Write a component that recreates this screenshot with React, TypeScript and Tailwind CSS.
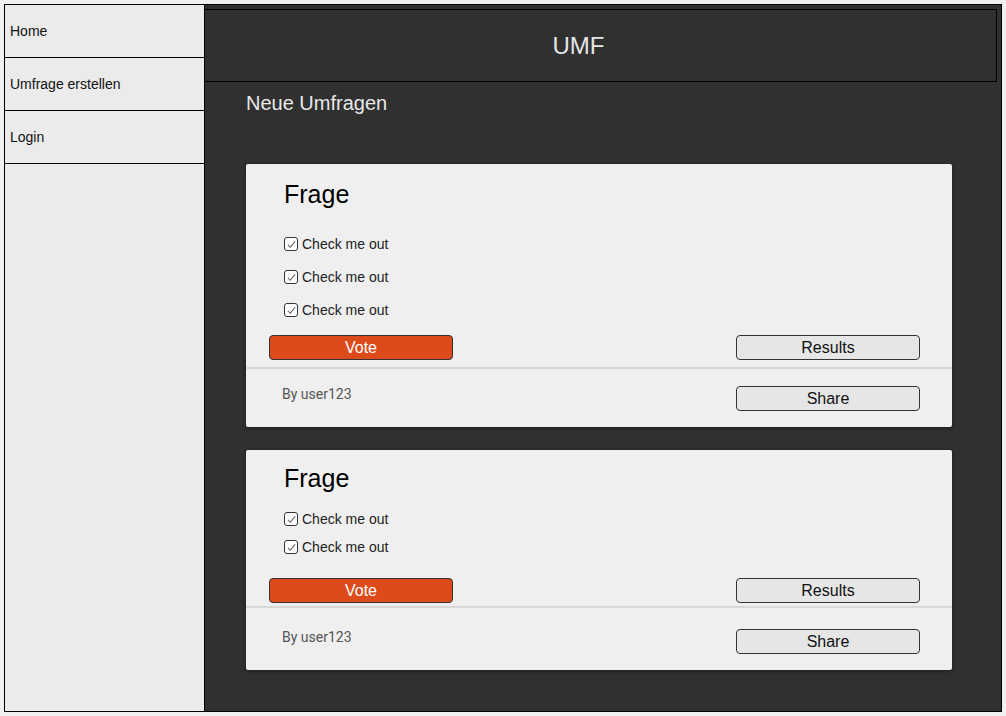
import React from 'react';

type Poll = {
  title: string;
  options: string[];
  // per-card spacing, written out in full so Tailwind picks them up
  top: string;
  list: string;
  actions: string;
  divider: string;
  footer: string;
};

const polls: Poll[] = [
  {
    title: 'Frage',
    options: ['Check me out', 'Check me out', 'Check me out'],
    top: 'pt-[16px]',
    list: 'mt-[25px] gap-[13px]',
    actions: 'mt-[15px]',
    divider: 'mt-[7px]',
    footer: 'pt-[17px] pb-[16px]',
  },
  {
    title: 'Frage',
    options: ['Check me out', 'Check me out'],
    top: 'pt-[14px]',
    list: 'mt-[16px] gap-[8px]',
    actions: 'mt-[21px]',
    divider: 'mt-[3px]',
    footer: 'pt-[21px] pb-[16px]',
  },
];

const navItems = ['Home', 'Umfrage erstellen', 'Login'];

const CheckBox: React.FC = () => (
  <span className="flex h-[14px] w-[14px] items-center justify-center rounded-[3px] border border-[#333] bg-white">
    <svg viewBox="0 0 12 12" className="h-[11px] w-[11px]" fill="none" stroke="#555" strokeWidth="1.1">
      <path d="M2 6.3 L4.6 9 L10 2.5" />
    </svg>
  </span>
);

const PollCard: React.FC<{ poll: Poll }> = ({ poll }) => (
  <div className={`w-[706px] rounded-[2px] bg-[#efefef] shadow-[0_1px_4px_rgba(0,0,0,0.45)] ${poll.top}`}>
    <h2 className="pl-[38px] text-[25px] leading-[29px] text-black">{poll.title}</h2>

    <div className={`flex flex-col pl-[38px] ${poll.list}`}>
      {poll.options.map((opt, i) => (
        <label key={i} className="flex h-[20px] items-center gap-[4px] text-[14px] text-[#222]">
          <CheckBox />
          {opt}
        </label>
      ))}
    </div>

    <div className={`flex justify-between pl-[23px] pr-[32px] ${poll.actions}`}>
      <button className="h-[25px] w-[184px] rounded-[4px] border border-[#333] bg-[#dd4b1a] text-[16px] leading-none text-white">
        Vote
      </button>
      <button className="h-[25px] w-[184px] rounded-[4px] border border-[#333] bg-[#e6e6e6] text-[16px] leading-none text-[#111]">
        Results
      </button>
    </div>

    <div className={`h-[2px] bg-[#d9d9d9] ${poll.divider}`} />

    <div className={`flex items-start justify-between pl-[36px] pr-[32px] ${poll.footer}`}>
      <span className="font-['Roboto',sans-serif] text-[14px] leading-[17px] text-[#555]">By user123</span>
      <button className="h-[25px] w-[184px] rounded-[4px] border border-[#333] bg-[#e6e6e6] text-[16px] leading-none text-[#111]">
        Share
      </button>
    </div>
  </div>
);

export default function App() {
  return (
    <div className="h-screen bg-[#f0f0f0] p-[4px] font-['Liberation_Sans',Arial,sans-serif]">
      <div className="flex h-full border border-black">
        {/* Sidebar */}
        <aside className="w-[200px] shrink-0 border-r border-black bg-[#ebebeb]">
          {navItems.map((item) => (
            <div
              key={item}
              className="flex h-[53px] items-center border-b border-black pl-[5px] text-[14px] text-[#111]"
            >
              {item}
            </div>
          ))}
        </aside>

        {/* Main */}
        <main className="flex-1 bg-[#303030] pr-[4px] pt-[4px]">
          <header className="flex h-[73px] items-center justify-center border-y border-r border-black pr-[44px]">
            <h1 className="text-[24px] text-[#e6e6e6]">UMF</h1>
          </header>

          <div className="pl-[41px]">
            <h3 className="mt-[10px] text-[20px] leading-[23px] text-[#e8e8e8]">Neue Umfragen</h3>

            <div className="mt-[49px] flex flex-col gap-[23px]">
              {polls.map((p, i) => (
                <PollCard key={i} poll={p} />
              ))}
            </div>
          </div>
        </main>
      </div>
    </div>
  );
}
